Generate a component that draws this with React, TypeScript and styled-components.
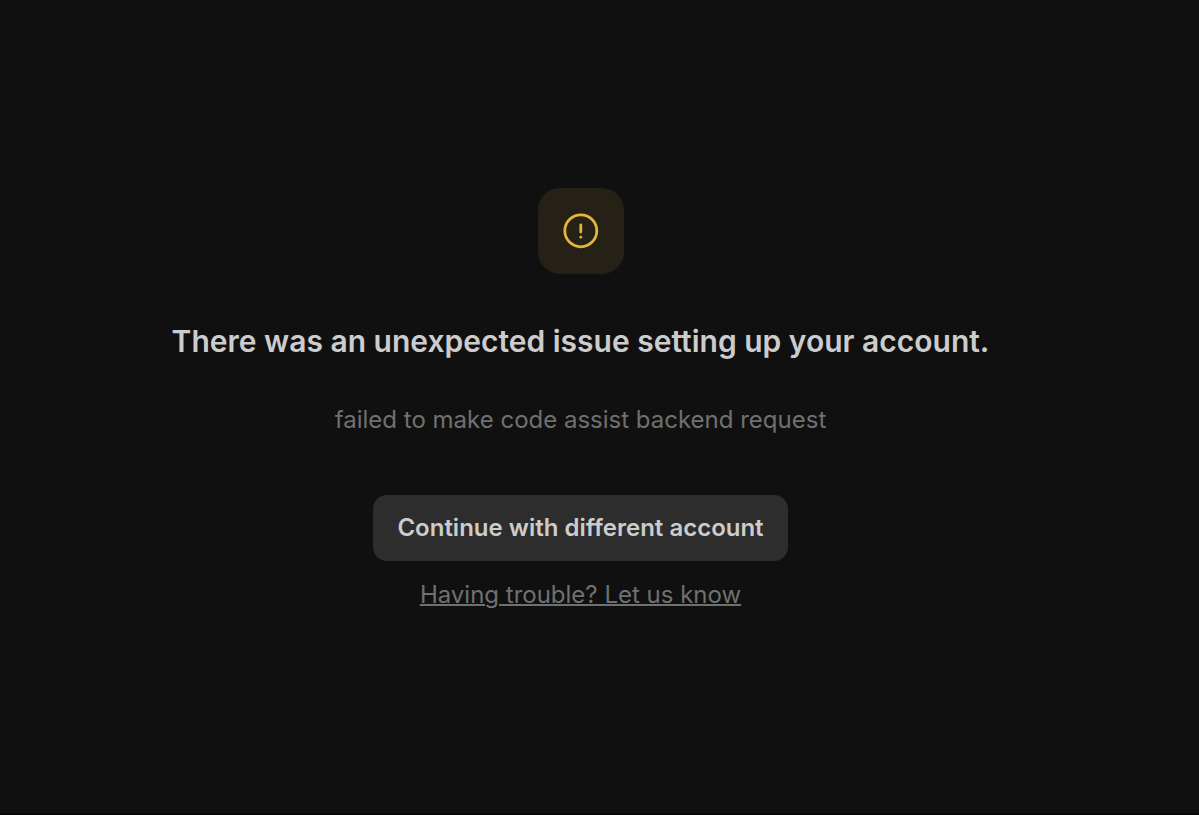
import React from "react";
import styled, { createGlobalStyle } from "styled-components";

const GlobalStyle = createGlobalStyle`
  * { box-sizing: border-box; }
  body {
    margin: 0;
    background: #101010;
    font-family: Inter, "Liberation Sans", sans-serif;
    -webkit-font-smoothing: antialiased;
  }
`;

const Page = styled.main`
  min-height: 100vh;
  display: flex;
  flex-direction: column;
  align-items: center;
  justify-content: center;
  padding: 0 38px 15px 0;
  border-bottom: 2px solid #080808;
  text-align: center;
`;

const IconTile = styled.div`
  display: grid;
  place-items: center;
  width: 86px;
  height: 86px;
  border-radius: 22px;
  background: #262116;
  color: #e5b539;
`;

const Title = styled.h1`
  margin: 47px 0 0;
  font-size: 30px;
  line-height: 40px;
  font-weight: 600;
  color: #cccccc;
`;

const Message = styled.p`
  margin: 43px 0 0;
  font-size: 24px;
  line-height: 32px;
  color: #707070;
`;

const Button = styled.button`
  margin: 59px 0 0;
  padding: 17px 24px;
  border: 0;
  border-radius: 14px;
  background: #2d2d2d;
  color: #cccccc;
  font-family: inherit;
  font-size: 24px;
  line-height: 32px;
  font-weight: 600;
  cursor: pointer;
`;

const HelpLink = styled.a`
  margin: 18px 0 0;
  font-size: 24px;
  line-height: 32px;
  color: #707070;
  text-decoration: underline;
  text-decoration-thickness: 2px;
`;

export default function App() {
  return (
    <>
      <GlobalStyle />
      <Page>
        <IconTile>
          <svg width="38" height="38" viewBox="0 0 38 38" fill="none" stroke="currentColor" strokeWidth="2.8" strokeLinecap="round" aria-hidden="true">
            <circle cx="18.8" cy="18.8" r="16" />
            <path d="M18.8 13v7" />
            <circle cx="18.8" cy="25.2" r="1.4" fill="currentColor" stroke="none" />
          </svg>
        </IconTile>
        <Title>There was an unexpected issue setting up your account.</Title>
        <Message>failed to make code assist backend request</Message>
        <Button type="button">Continue with different account</Button>
        <HelpLink href="#help">Having trouble? Let us know</HelpLink>
      </Page>
    </>
  );
}
